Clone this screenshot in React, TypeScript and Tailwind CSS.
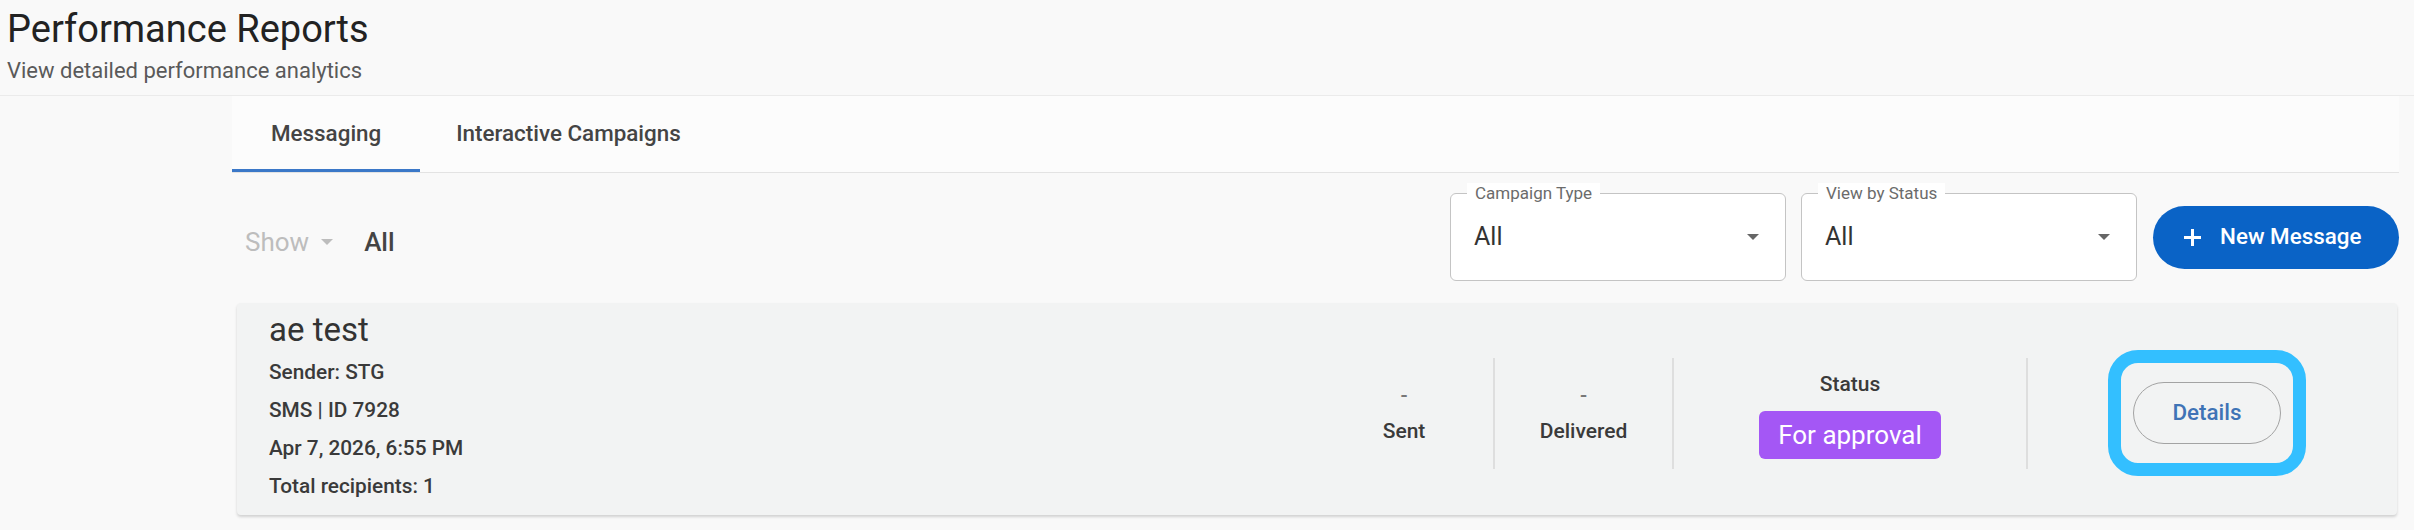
import React from "react";

function DropArrow({ className = "" }: { className?: string }) {
  return (
    <svg width="12" height="6" viewBox="0 0 12 6" className={className} aria-hidden>
      <path d="M0 0h12L6 6z" fill="currentColor" />
    </svg>
  );
}

function Select({ label, value }: { label: string; value: string }) {
  return (
    <div className="relative flex h-[88px] w-[336px] items-center justify-between rounded-[6px] border border-[#c4c4c4] bg-white pl-[23px] pr-[26px]">
      {/* label sits on the top border, like an outlined field */}
      <span className="absolute -top-[11px] left-[16px] bg-white px-[8px] text-[17px] leading-[20px] text-[#6b6b6b]">
        {label}
      </span>
      <span className="text-[25px] leading-[30px] text-[#333]">{value}</span>
      <DropArrow className="text-[#666]" />
    </div>
  );
}

function Stat({ value, label }: { value: string; label: string }) {
  return (
    <div className="flex flex-col items-center">
      <span className="text-[21px] font-medium leading-[36px] text-[#777]">{value}</span>
      <span className="text-[21px] font-medium leading-[36px] text-[#3a3a3a]">{label}</span>
    </div>
  );
}

function Divider() {
  return <div className="h-[111px] w-[2px] shrink-0 bg-[#dedede]" />;
}

export default function App() {
  return (
    <div className="min-h-screen w-full bg-[#f9f9f9] font-[family-name:Roboto,sans-serif] text-[#333]">
      {/* page header */}
      <header className="h-[96px] border-b border-[#ebebeb] pl-[7px] pt-[6px]">
        <h1 className="text-[38px] font-normal leading-[46px] text-[#222]">Performance Reports</h1>
        <p className="mt-[2px] text-[22px] leading-[33px] text-[#5a5a5a]">
          View detailed performance analytics
        </p>
      </header>

      <main className="ml-[232px] mr-[15px]">
        {/* tabs */}
        <nav className="flex h-[77px] border-b border-[#e3e3e3] bg-[#fcfcfc]">
          <button className="relative h-full px-[39px] text-[22.4px] font-medium text-[#444]">
            Messaging
            <span className="absolute bottom-0 left-0 right-0 h-[3px] bg-[#3b78c8]" />
          </button>
          <button className="h-full px-[36px] text-[22.4px] font-medium text-[#444]">
            Interactive Campaigns
          </button>
        </nav>

        {/* filters */}
        <div className="mt-[20px] flex h-[88px] items-center">
          <div className="flex items-center pl-[13px] pt-[10px]">
            <span className="text-[26px] leading-[30px] text-[#bdbdbd]">Show</span>
            <DropArrow className="ml-[12px] text-[#bdbdbd]" />
            <span className="ml-[31px] text-[26px] font-medium leading-[30px] text-[#444]">All</span>
          </div>
          <div className="flex-1" />
          <div className="flex items-center gap-[15px]">
            <Select label="Campaign Type" value="All" />
            <Select label="View by Status" value="All" />
          </div>
          <button className="ml-[16px] flex h-[63px] w-[246px] items-center rounded-full bg-[#0a63c6] pl-[30px] text-[22.4px] font-medium text-white">
            <svg width="19" height="19" viewBox="0 0 19 19" aria-hidden>
              <path d="M9.5 1v17M1 9.5h17" stroke="white" strokeWidth="3" />
            </svg>
            <span className="ml-[18px]">New Message</span>
          </button>
        </div>

        {/* message card */}
        <div className="ml-[5px] mr-[2px] mt-[22px] flex h-[212px] rounded-[4px] bg-[#f2f3f3] shadow-[0_2px_3px_rgba(0,0,0,0.16)]">
          <div className="flex-1 pl-[32px] pt-[7px]">
            <div className="text-[33px] leading-[40px] text-[#333]">ae test</div>
            <div className="mt-[3px] text-[20.8px] font-medium leading-[38px] text-[#3a3a3a]">
              <div>Sender: STG</div>
              <div>SMS | ID 7928</div>
              <div>Apr 7, 2026, 6:55 PM</div>
              <div>Total recipients: 1</div>
            </div>
          </div>

          <div className="flex items-center pr-[11px] pt-[8px]">
            <div className="flex w-[178px] justify-center">
              <Stat value="-" label="Sent" />
            </div>
            <Divider />
            <div className="flex w-[177px] justify-center">
              <Stat value="-" label="Delivered" />
            </div>
            <Divider />
            <div className="flex w-[352px] flex-col items-center">
              <span className="text-[21px] font-medium leading-[34px] text-[#3a3a3a]">Status</span>
              <span className="mt-[10px] flex h-[48px] items-center rounded-[6px] bg-[#a457f5] px-[19px] text-[26px] leading-none text-white">
                For approval
              </span>
            </div>
            <Divider />
            <div className="flex w-[358px] justify-center">
              <div className="rounded-[30px] border-[13px] border-[#33bfff] px-[12px] py-[19px]">
                <button className="h-[62px] w-[148px] rounded-full border-[1.6px] border-[#a3a3a3] text-[22.4px] font-medium text-[#3f73b6]">
                  Details
                </button>
              </div>
            </div>
          </div>
        </div>
      </main>
    </div>
  );
}
